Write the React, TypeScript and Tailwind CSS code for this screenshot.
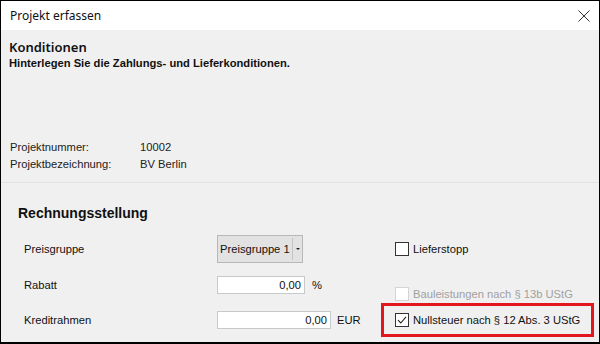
import React from 'react';

const SANS = "font-['Liberation_Sans',Arial,sans-serif]";
const UI = "font-['Noto_Sans','Open_Sans',sans-serif]";

function CheckBox({ checked, disabled }: { checked?: boolean; disabled?: boolean }) {
    return (
        <span
            className={`flex h-[14px] w-[14px] shrink-0 items-center justify-center border bg-white ${
                disabled ? 'border-[#d4d4d4] bg-[#f7f7f7]' : 'border-[#333333]'
            }`}
        >
            {checked && (
                <svg width="10" height="10" viewBox="0 0 10 10" fill="none">
                    <path d="M1 5.2 L3.8 8 L9 1.8" stroke="#222" strokeWidth="1.1" />
                </svg>
            )}
        </span>
    );
}

function CheckRow({
    label,
    checked,
    disabled,
}: {
    label: string;
    checked?: boolean;
    disabled?: boolean;
}) {
    return (
        <label className="flex items-center gap-[4px]">
            <CheckBox checked={checked} disabled={disabled} />
            <span className={disabled ? 'text-[#a0a0a0]' : 'text-[#111]'}>{label}</span>
        </label>
    );
}

export default function App() {
    return (
        <div
            className={`flex h-[344px] w-[600px] flex-col overflow-hidden border border-b-2 border-black bg-[#f0f0f0] ${SANS}`}
        >
            {/* title bar */}
            <div className={`flex h-[29px] shrink-0 items-center justify-between bg-white pl-[9px] pr-[9px] ${UI}`}>
                <span className="text-[12px] text-[#111]">Projekt erfassen</span>
                <svg width="12" height="12" viewBox="0 0 12 12">
                    <path d="M0.5 0.5 L11.5 11.5 M11.5 0.5 L0.5 11.5" stroke="#333" strokeWidth="1" />
                </svg>
            </div>

            {/* header */}
            <div className="flex h-[153px] shrink-0 flex-col border-b border-[#e2e2e2] pl-[8px]">
                <div className={`mt-[9px] text-[13px] font-semibold leading-[17px] text-[#111] ${UI}`}>
                    Konditionen
                </div>
                <div className="text-[11.2px] font-bold leading-[15px] text-[#111]">
                    Hinterlegen Sie die Zahlungs- und Lieferkonditionen.
                </div>
                <div className="mt-auto mb-[9px] grid grid-cols-[130px_1fr] pl-[1px] text-[11.2px] leading-[17px] text-[#222]">
                    <span>Projektnummer:</span>
                    <span>10002</span>
                    <span>Projektbezeichnung:</span>
                    <span>BV Berlin</span>
                </div>
            </div>

            {/* body */}
            <div className="flex flex-1 flex-col pl-[17px] text-[11.2px] text-[#111]">
                <div className="mt-[21px] text-[14px] font-bold leading-[18px]">Rechnungsstellung</div>
                <div className="mt-[13px] flex">
                    <div className="flex w-[363px] flex-col pl-[6px]">
                        <div className="flex h-[28px] items-center">
                            <span className="w-[193px]">Preisgruppe</span>
                            <div className="flex h-[28px] w-[86px] items-center border border-[#b8b8b8] bg-[#e2e2e2]">
                                <span className="flex-1 pl-[2px]">Preisgruppe 1</span>
                                <span className="h-[22px] w-px bg-[#c4c4c4]" />
                                <span className="flex w-[9px] justify-center">
                                    <span className="h-0 w-0 border-x-[2px] border-t-[2px] border-x-transparent border-t-[#222]" />
                                </span>
                            </div>
                        </div>
                        <div className="mt-[13px] flex h-[18px] items-center">
                            <span className="w-[193px]">Rabatt</span>
                            <div className="flex h-[18px] w-[88px] items-center justify-end border border-[#c9c9c9] bg-white pr-[3px]">
                                0,00
                            </div>
                            <span className="ml-[7px]">%</span>
                        </div>
                        <div className="mt-[17px] flex h-[18px] items-center">
                            <span className="w-[193px]">Kreditrahmen</span>
                            <div className="flex h-[18px] w-[114px] items-center justify-end border border-[#c9c9c9] bg-white pr-[3px]">
                                0,00
                            </div>
                            <span className="ml-[6px]">EUR</span>
                        </div>
                    </div>
                    <div className="flex flex-col">
                        <div className="flex h-[28px] items-center pl-[14px]">
                            <CheckRow label="Lieferstopp" />
                        </div>
                        <div className="mt-[23px] flex h-[17px] items-center pl-[14px]">
                            <CheckRow label="Bauleistungen nach § 13b UStG" disabled />
                        </div>
                        <div className="flex h-[34px] w-[213px] items-center border-[3px] border-[#e3151d] pl-[11px]">
                            <CheckRow label="Nullsteuer nach § 12 Abs. 3 UStG" checked />
                        </div>
                    </div>
                </div>
            </div>
        </div>
    );
}
